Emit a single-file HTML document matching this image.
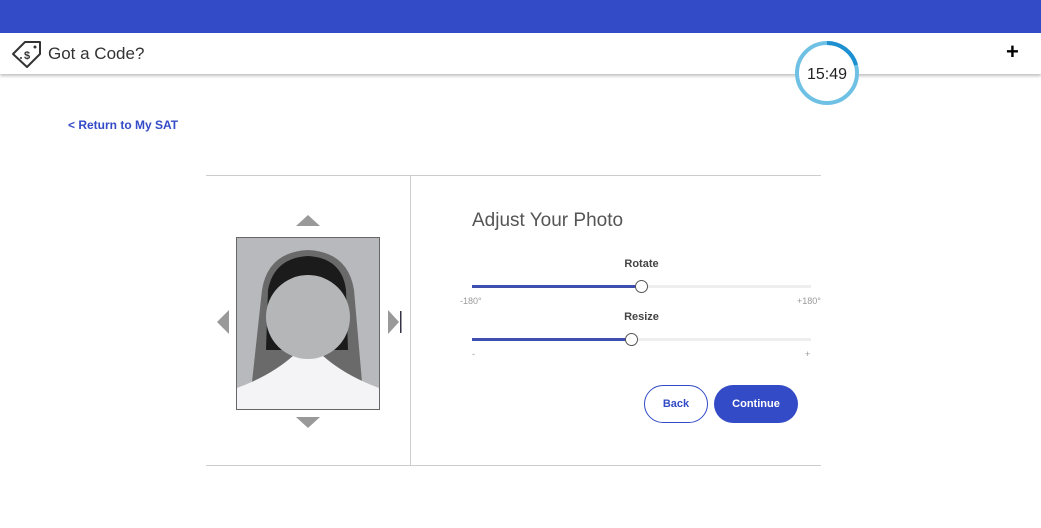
<!DOCTYPE html>
<html><head><meta charset="utf-8"><style>
*{margin:0;padding:0;box-sizing:border-box}
body{width:1041px;height:528px;background:#fff;font-family:"Liberation Sans",sans-serif;position:relative;overflow:hidden}
.abs{position:absolute}
</style></head><body>
<div class="abs" style="left:0;top:0;width:1041px;height:33px;background:#334bc6"></div>
<div class="abs" style="left:0;top:33px;width:1041px;height:41px;background:#fff;box-shadow:0 2px 3px rgba(0,0,0,.25)"></div>
<svg class="abs" style="left:10px;top:39px" width="34" height="30" viewBox="0 0 34 30">
<path d="M3 15 L15 3 L30 3 L30 15 L17 28 Z" fill="none" stroke="#333" stroke-width="2" stroke-linejoin="round"/>
<text x="14" y="20" font-size="11" font-family="Liberation Sans" fill="#333" font-weight="bold">$</text>
<circle cx="25" cy="8" r="1.5" fill="#333"/><circle cx="11" cy="19" r="1" fill="#333"/>
</svg>
<div class="abs" style="left:48px;top:44px;font-size:17px;color:#333">Got a Code?</div>
<div class="abs" style="left:1006px;top:39px;font-size:22px;font-weight:bold;color:#000">+</div>
<svg class="abs" style="left:794px;top:40px" width="66" height="66" viewBox="0 0 66 66">
<circle cx="33" cy="33" r="30" fill="#fff" stroke="#6ec1e4" stroke-width="4"/>
<path d="M33 3 A30 30 0 0 1 62 25" fill="none" stroke="#1e8fd0" stroke-width="4"/>
<text x="33" y="39" text-anchor="middle" font-size="16" font-family="Liberation Sans" fill="#222">15:49</text>
</svg>
<div class="abs" style="left:68px;top:118px;font-size:12px;font-weight:bold;color:#334bc6">&lt; Return to My SAT</div>
<div class="abs" style="left:206px;top:175px;width:615px;height:1px;background:#ccc"></div>
<div class="abs" style="left:206px;top:465px;width:615px;height:1px;background:#ccc"></div>
<div class="abs" style="left:410px;top:175px;width:1px;height:290px;background:#ccc"></div>
<svg class="abs" style="left:210px;top:210px" width="200" height="225" viewBox="0 0 200 225">
<polygon points="86,16 98,5 110,16" fill="#999"/>
<polygon points="86,207 98,218 110,207" fill="#999"/>
<polygon points="19,124 7,112 19,100" fill="#999"/>
<polygon points="178,100 189,112 178,124" fill="#999"/>
<rect x="190" y="101" width="1.5" height="22" fill="#334"/>
<rect x="26.5" y="27.5" width="143" height="172" fill="#b8b9bd" stroke="#666"/>
<path d="M42 172 L52 80 Q58 42 98 40 Q138 42 144 80 L152 172 Z" fill="#6a6a6a"/>
<path d="M56 140 L58 80 Q64 48 98 46 Q132 48 136 80 L138 140 Z" fill="#1b1b1b"/>
<path d="M27 178 Q62 165 84 145 L112 145 Q134 165 169 178 L169 199 L27 199 Z" fill="#f4f4f6"/>
<circle cx="98" cy="107" r="42" fill="#b5b6b8"/>
</svg>
<div class="abs" style="left:472px;top:210px;font-size:19px;color:#555">Adjust Your Photo</div>
<div class="abs" style="left:472px;top:258px;width:339px;text-align:center;font-size:11px;font-weight:bold;color:#444">Rotate</div>
<div class="abs" style="left:472px;top:285px;width:339px;height:3px;background:#eee"></div>
<div class="abs" style="left:472px;top:285px;width:170px;height:3px;background:#3f4fb0"></div>
<div class="abs" style="left:635px;top:280px;width:13px;height:13px;border-radius:50%;background:#fff;border:1px solid #555"></div>
<div class="abs" style="left:460px;top:296px;font-size:9px;color:#999">-180°</div>
<div class="abs" style="left:797px;top:296px;font-size:9px;color:#999">+180°</div>
<div class="abs" style="left:472px;top:311px;width:339px;text-align:center;font-size:11px;font-weight:bold;color:#444">Resize</div>
<div class="abs" style="left:472px;top:338px;width:339px;height:3px;background:#eee"></div>
<div class="abs" style="left:472px;top:338px;width:160px;height:3px;background:#3f4fb0"></div>
<div class="abs" style="left:625px;top:333px;width:13px;height:13px;border-radius:50%;background:#fff;border:1px solid #555"></div>
<div class="abs" style="left:472px;top:349px;font-size:9px;color:#999">-</div>
<div class="abs" style="left:805px;top:349px;font-size:9px;color:#999">+</div>
<div class="abs" style="left:644px;top:385px;width:64px;height:38px;border:1px solid #334bc6;border-radius:19px;color:#334bc6;font-size:11px;font-weight:bold;text-align:center;line-height:36px">Back</div>
<div class="abs" style="left:714px;top:385px;width:84px;height:38px;background:#334bc6;border-radius:19px;color:#fff;font-size:11px;font-weight:bold;text-align:center;line-height:38px">Continue</div>
</body></html>
